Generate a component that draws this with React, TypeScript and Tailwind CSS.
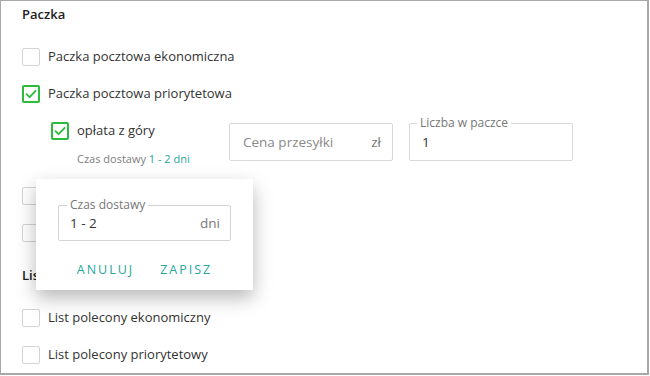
import React from "react";

const font = { fontFamily: '"Open Sans", "Noto Sans", sans-serif' };

function Box({ checked }: { checked?: boolean }) {
  if (checked) {
    return (
      <div className="w-[18px] h-[18px] rounded-[2px] border-2 border-[#2dbb3c] flex items-center justify-center shrink-0 bg-white">
        <svg width="12" height="10" viewBox="0 0 12 10">
          <path d="M1.5 5.2 L4.6 8.2 L10.6 1.8" fill="none" stroke="#2dbb3c" strokeWidth="1.8" strokeLinecap="round" strokeLinejoin="round" />
        </svg>
      </div>
    );
  }
  return <div className="w-[18px] h-[18px] rounded-[2px] border border-[#d4d4d4] bg-white shrink-0" />;
}

function Row({ label, checked }: { label?: string; checked?: boolean }) {
  return (
    <div className="h-[37px] flex items-center gap-[8px]">
      <Box checked={checked} />
      {label ? <span className="text-[13px] text-[#333]">{label}</span> : null}
    </div>
  );
}

export default function App() {
  return (
    <div style={font} className="relative w-[649px] h-[375px] bg-white border-l border-t border-r-2 border-b-2 border-[#a8a8a8] overflow-hidden">
      <div className="flex flex-col pl-[21px]">
        <div className="h-[20px] mt-[4px] flex items-center text-[13px] font-semibold text-[#222]">Paczka</div>
        <div className="mt-[13px]">
          <Row label="Paczka pocztowa ekonomiczna" />
          <Row label="Paczka pocztowa priorytetowa" checked />
        </div>
        <div className="flex pl-[29px]">
          <div className="w-[178px] flex flex-col">
            <div className="h-[37px] flex items-center gap-[8px]">
              <Box checked />
              <span className="text-[13px] text-[#333]">opłata z góry</span>
            </div>
            <div className="mt-[2px] h-[16px] pl-[26px] flex items-center text-[11px] text-[#808080]">
              Czas dostawy&nbsp;<span className="text-[#26a69a]">1 - 2 dni</span>
            </div>
          </div>
          <div className="mt-[11px] flex gap-[16px]">
            <div className="w-[164px] h-[38px] border border-[#d8d8d8] rounded-[2px] flex items-center justify-between pl-[13px] pr-[11px] text-[13.5px]">
              <span className="text-[#8a8a8a]">Cena przesyłki</span>
              <span className="text-[#777]">zł</span>
            </div>
            <div className="relative w-[164px] h-[38px] border border-[#d8d8d8] rounded-[2px] flex items-center pl-[12px] text-[13.5px] text-[#333]">
              <span className="absolute left-[7px] -top-[9px] bg-white px-[3px] text-[12px] leading-[16px] text-[#777]">Liczba w paczce</span>
              1
            </div>
          </div>
        </div>
        <div className="mt-[10px]">
          <Row />
          <Row />
        </div>
        <div className="h-[20px] mt-[15px] flex items-center text-[13px] font-semibold text-[#222]">Listy</div>
        <div className="mt-[13px]">
          <Row label="List polecony ekonomiczny" />
          <Row label="List polecony priorytetowy" />
        </div>
      </div>

      <div className="absolute left-[35px] top-[178px] w-[217px] h-[111px] bg-white shadow-[0_8px_18px_rgba(0,0,0,0.28)] flex flex-col items-center">
        <div className="relative mt-[26px] w-[173px] h-[36px] border border-[#d4d4d4] rounded-[2px] flex items-center justify-between pl-[11px] pr-[10px] text-[13.5px]">
          <span className="absolute left-[8px] -top-[9px] bg-white px-[3px] text-[12px] leading-[16px] text-[#777]">Czas dostawy</span>
          <span className="text-[#333]">1 - 2</span>
          <span className="text-[#777]">dni</span>
        </div>
        <div className="mt-[20px] flex gap-[26px] text-[12.5px] font-medium tracking-[2px] text-[#26a69a]">
          <span>ANULUJ</span>
          <span>ZAPISZ</span>
        </div>
      </div>
    </div>
  );
}
